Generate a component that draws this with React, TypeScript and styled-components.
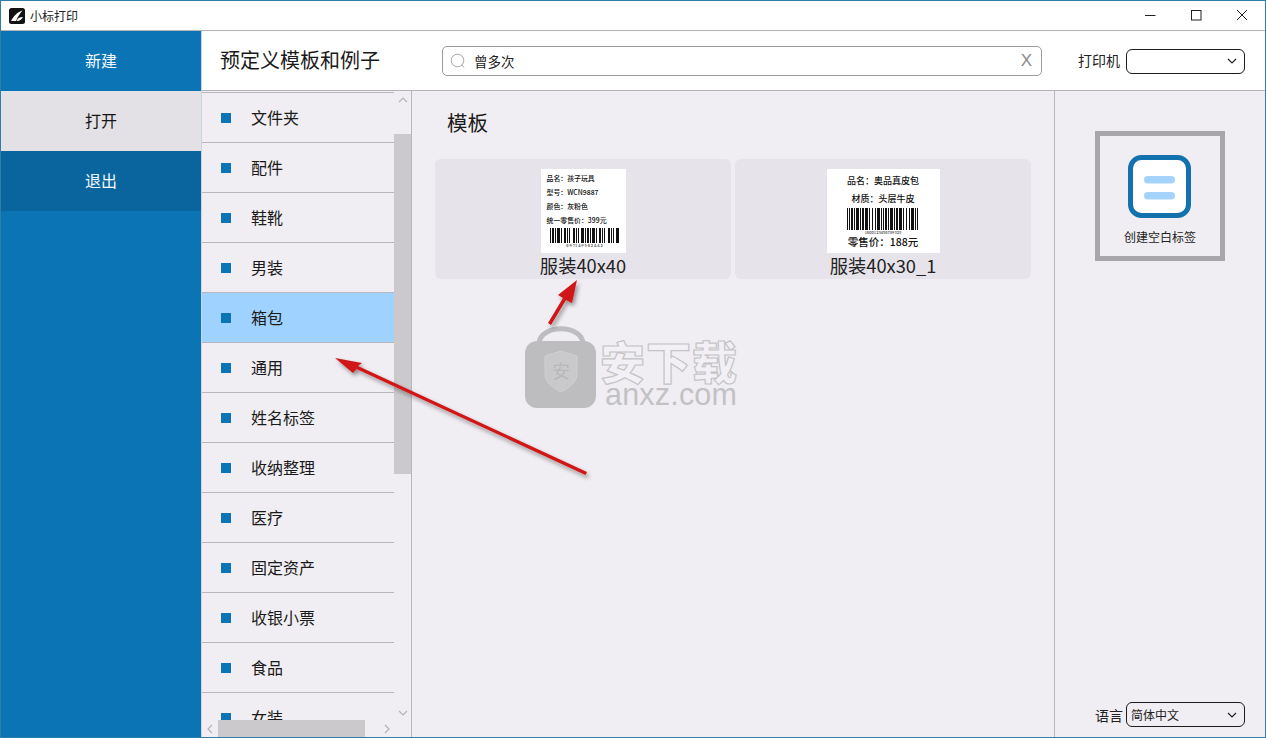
import React from "react";
import styled, { createGlobalStyle } from "styled-components";

const CJK = `"Noto Sans CJK SC", "Noto Sans", sans-serif`;

const Global = createGlobalStyle`
  html, body { margin: 0; padding: 0; background: #f0eef2; }
  body { font-family: ${CJK}; color: #151515; overflow: hidden; }
  * { box-sizing: border-box; }
`;

const Win = styled.div`
  position: relative;
  width: 1266px;
  height: 738px;
  display: flex;
  flex-direction: column;
  border: 1px solid #2f7ea6;
  overflow: hidden;
  background: #f0eef2;
`;

const TitleBar = styled.div`
  height: 30px;
  flex: none;
  display: flex;
  align-items: center;
  background: #fff;
  border-bottom: 1px solid #b4b4b8;
  padding-left: 8px;
`;
const AppTitle = styled.span`
  font-size: 12px;
  margin-left: 5px;
  color: #222;
  flex: 1;
`;
const WinBtns = styled.div`
  display: flex;
  height: 100%;
  align-items: center;
`;
const WinBtn = styled.div`
  width: 46px;
  height: 100%;
  display: flex;
  align-items: center;
  justify-content: center;
  padding-bottom: 2px;
`;

const Body = styled.div`
  flex: 1;
  display: flex;
  min-height: 0;
`;
const Sidebar = styled.nav`
  width: 200px;
  flex: none;
  background: #0a74b4;
  display: flex;
  flex-direction: column;
`;
const NavItem = styled.div<{ $v?: "open" | "exit" }>`
  height: 60px;
  display: flex;
  align-items: center;
  justify-content: center;
  font-size: 16px;
  padding-bottom: 2px;
  background: ${(p) => (p.$v === "open" ? "#e3e1e6" : p.$v === "exit" ? "#0a659e" : "#0a74b4")};
  color: ${(p) => (p.$v === "open" ? "#151515" : "#f2f8fc")};
`;
const Main = styled.div`
  flex: 1;
  min-width: 0;
  display: flex;
  flex-direction: column;
  border-left: 1px solid #c9d6e0;
`;
const Header = styled.header`
  height: 60px;
  flex: none;
  background: #fff;
  border-bottom: 1px solid #b4b4b8;
  display: flex;
  align-items: center;
  padding: 0 20px 0 18px;
`;
const Heading = styled.h1`
  margin: 0 0 2px;
  width: 222px;
  flex: none;
  font-size: 20px;
  font-weight: 400;
  color: #1a1a1a;
`;
const Search = styled.div`
  width: 600px;
  height: 30px;
  flex: none;
  border: 1px solid #9c9c9e;
  border-radius: 5px;
  display: flex;
  align-items: center;
  padding: 0 9px 0 7px;
  background: #fff;
`;
const SearchText = styled.span`
  flex: 1;
  font-size: 13.5px;
  color: #222;
  margin-left: 8px;
`;
const Clear = styled.span`
  font-family: "Liberation Sans", sans-serif;
  font-size: 17px;
  color: #8a8a8a;
`;
const FieldLabel = styled.span`
  font-size: 14px;
  color: #222;
  margin-right: 5px;
  white-space: nowrap;
`;
const PrinterLabel = styled(FieldLabel)`
  margin-left: 36px;
  margin-right: 6px;
  margin-bottom: 1px;
`;
const LangLabel = styled(FieldLabel)`
  margin-right: 3px;
`;
const Select = styled.div<{ $w: number }>`
  width: ${(p) => p.$w}px;
  height: 25px;
  border: 1px solid #1c1c1c;
  border-radius: 6px;
  display: flex;
  align-items: center;
  justify-content: space-between;
  padding: 0 7px 0 4px;
  background: transparent;
  font-size: 12px;
  color: #222;
`;
const PrinterSelect = styled(Select)`
  margin-top: 1px;
`;
const Content = styled.div`
  flex: 1;
  min-height: 0;
  display: flex;
`;
const ListPane = styled.div`
  position: relative;
  width: 210px;
  flex: none;
  display: flex;
  border-right: 1px solid #b8b8bc;
  overflow: hidden;
`;
const List = styled.div`
  width: 192px;
  flex: none;
  padding-top: 1px;
`;
const Row = styled.div<{ $sel?: boolean }>`
  height: 50px;
  display: flex;
  align-items: center;
  padding-left: 19px;
  border-top: 1px solid #b8b8bc;
  background: ${(p) => (p.$sel ? "#a0d2ff" : "transparent")};
  font-size: 16px;
  color: #1a1a1a;
`;
const RowLabel = styled.span`
  margin-bottom: 2px;
`;
const Bullet = styled.span`
  width: 10px;
  height: 10px;
  flex: none;
  background: #0a74b4;
  margin-right: 20px;
`;
const VTrack = styled.div`
  width: 17px;
  flex: none;
  display: flex;
  flex-direction: column;
`;
const VArrow = styled.div`
  height: 43px;
  flex: none;
  display: flex;
  justify-content: center;
  padding-top: 4px;
`;
const VThumb = styled.div`
  height: 340px;
  background: #cbc9cc;
  flex: none;
`;
const VBottom = styled.div`
  flex: 1;
  display: flex;
  flex-direction: column;
  justify-content: flex-end;
  align-items: center;
  padding-bottom: 19px;
`;
const HBar = styled.div`
  position: absolute;
  left: 0;
  right: 0;
  bottom: 0;
  height: 17px;
  background: #f0eef2;
  display: flex;
  align-items: center;
`;
const HArrow = styled.div`
  width: 16px;
  display: flex;
  justify-content: center;
  flex: none;
`;
const HThumb = styled.div`
  width: 147px;
  height: 17px;
  background: #cbc9cc;
  flex: none;
`;
const HRest = styled.div`
  flex: 1;
  display: flex;
  justify-content: flex-end;
  padding-right: 19px;
`;
const Templates = styled.section`
  flex: 1;
  min-width: 0;
  border-right: 1px solid #b8b8bc;
  padding: 16px 23px 0 23px;
`;
const SectionTitle = styled.h2`
  margin: 0 0 22px 12px;
  font-size: 20.5px;
  line-height: 30px;
  font-weight: 400;
  color: #1a1a1a;
`;
const Cards = styled.div`
  display: flex;
  gap: 4px;
`;
const Card = styled.div`
  width: 296px;
  height: 120px;
  background: #e6e4ea;
  border-radius: 6px;
  display: flex;
  flex-direction: column;
  align-items: center;
  padding-top: 10px;
`;
const Caption = styled.div`
  font-size: 18.3px;
  line-height: 24px;
  color: #222;
  white-space: nowrap;
`;
const Thumb = styled.div<{ $w: number }>`
  width: ${(p) => p.$w}px;
  height: 84px;
  background: #fff;
  flex: none;
  display: flex;
  flex-direction: column;
  overflow: hidden;
`;
const ThumbA = styled(Thumb)`
  padding: 2px 0 0 6px;
  font-size: 6.9px;
  font-weight: 500;
  color: #111;
`;
const ALine = styled.div`
  height: 14px;
  line-height: 14px;
  white-space: nowrap;
`;
const ABar = styled.div`
  margin: 1px 0 0 3px;
  display: flex;
  flex-direction: column;
  align-items: flex-start;
`;
const BarNo = styled.div`
  font-size: 4px;
  line-height: 5px;
  color: #444;
  text-align: center;
  white-space: nowrap;
`;
const ABarNo = styled(BarNo)`
  width: 70px;
`;
const ThumbB = styled(Thumb)`
  align-items: center;
  padding-top: 3px;
  font-size: 9px;
  font-weight: 500;
  color: #111;
`;
const BLine = styled.div`
  height: 18px;
  line-height: 18px;
  white-space: nowrap;
`;
const BPrice = styled.div`
  font-size: 10.5px;
  line-height: 13px;
  white-space: nowrap;
`;
const Side = styled.aside`
  width: 210px;
  flex: none;
  display: flex;
  flex-direction: column;
  padding: 40px 0 0 40px;
`;
const Blank = styled.div`
  width: 130px;
  height: 130px;
  border: 5px solid #a8a6a9;
  display: flex;
  flex-direction: column;
  align-items: center;
  padding-top: 19px;
`;
const BlankIcon = styled.svg`
  margin-right: 1px;
  flex: none;
`;
const BlankLabel = styled.div`
  font-size: 12px;
  line-height: 16px;
  margin-top: 11px;
  color: #222;
  white-space: nowrap;
`;
const Lang = styled.div`
  margin-top: auto;
  display: flex;
  align-items: center;
  margin-bottom: 10px;
`;
const Mark = styled.div`
  position: absolute;
  left: 524px;
  top: 325px;
  display: flex;
  gap: 8px;
  pointer-events: none;
`;
const MarkWords = styled.div`
  display: flex;
  flex-direction: column;
  padding-top: 14px;
`;
const MarkCn = styled.div`
  font-size: 45px;
  line-height: 41px;
  font-weight: 900;
  letter-spacing: 1px;
  margin-left: -5px;
  color: #f2f0f4;
  -webkit-text-stroke: 1.2px #c4c4c6;
  white-space: nowrap;
`;
const MarkEn = styled.div`
  font-family: "Liberation Sans", sans-serif;
  font-size: 30.5px;
  line-height: 26px;
  letter-spacing: 0.2px;
  color: #c2c2c4;
  white-space: nowrap;
`;
const Arrows = styled.svg`
  position: absolute;
  left: -1px;
  top: -1px;
  pointer-events: none;
`;

const Chev = ({ d, c = "#b4b4b6" }: { d: string; c?: string }) => (
  <svg width="10" height="10" viewBox="0 0 10 10" fill="none" stroke={c} strokeWidth="1.2">
    <path d={d} />
  </svg>
);
const UP = "M1 7L5 3L9 7";
const DOWN = "M1 3L5 7L9 3";
const LEFT = "M7 1L3 5L7 9";
const RIGHT = "M3 1L7 5L3 9";

const Barcode = ({ w, h, seed }: { w: number; h: number; seed: number[] }) => {
  const bars: React.ReactElement[] = [];
  let x = 0;
  let i = 0;
  while (x < w) {
    const bw = seed[i % seed.length];
    if (i % 2 === 0) bars.push(<rect key={i} x={x} y={0} width={bw} height={h} fill="#111" />);
    x += bw;
    i++;
  }
  return (
    <svg width={w} height={h} viewBox={`0 0 ${w} ${h}`} style={{ flex: "none" }}>
      {bars}
    </svg>
  );
};

const CATS = ["文件夹", "配件", "鞋靴", "男装", "箱包", "通用", "姓名标签", "收纳整理", "医疗", "固定资产", "收银小票", "食品", "女装"];

export default function App() {
  return (
    <Win>
      <Global />
      <TitleBar>
        <svg width="16" height="16" viewBox="0 0 16 16">
          <rect width="16" height="16" rx="2.5" fill="#111" />
          <path d="M2 13C4.5 8.5 8 4 13.5 2.5C11 5.5 8.5 9 7 13Z" fill="#fff" />
          <path d="M7.5 13C8.5 10.5 10.5 9 14 9C13 11 11 13 7.5 13Z" fill="#fff" />
        </svg>
        <AppTitle>小标打印</AppTitle>
        <WinBtns>
          <WinBtn>
            <svg width="12" height="12" viewBox="0 0 12 12"><path d="M1 6.5H11.5" stroke="#222" strokeWidth="1" /></svg>
          </WinBtn>
          <WinBtn>
            <svg width="12" height="12" viewBox="0 0 12 12"><rect x="1.5" y="1.5" width="9.5" height="9.5" fill="none" stroke="#222" strokeWidth="1" /></svg>
          </WinBtn>
          <WinBtn>
            <svg width="12" height="12" viewBox="0 0 12 12"><path d="M1 1L11 11M11 1L1 11" stroke="#222" strokeWidth="1" /></svg>
          </WinBtn>
        </WinBtns>
      </TitleBar>
      <Body>
        <Sidebar>
          <NavItem>新建</NavItem>
          <NavItem $v="open">打开</NavItem>
          <NavItem $v="exit">退出</NavItem>
        </Sidebar>
        <Main>
          <Header>
            <Heading>预定义模板和例子</Heading>
            <Search>
              <svg width="16" height="16" viewBox="0 0 16 16" fill="none" stroke="#a6a6a6" strokeWidth="1">
                <circle cx="7.5" cy="7.5" r="6.3" />
                <path d="M12 12L14 14.5" />
              </svg>
              <SearchText>曾多次</SearchText>
              <Clear>X</Clear>
            </Search>
            <PrinterLabel>打印机</PrinterLabel>
            <PrinterSelect $w={119}>
              <span />
              <Chev d={DOWN} c="#222" />
            </PrinterSelect>
          </Header>
          <Content>
            <ListPane>
              <List>
                {CATS.map((c) => (
                  <Row key={c} $sel={c === "箱包"}>
                    <Bullet />
                    <RowLabel>{c}</RowLabel>
                  </Row>
                ))}
              </List>
              <VTrack>
                <VArrow><Chev d={UP} /></VArrow>
                <VThumb />
                <VBottom><Chev d={DOWN} /></VBottom>
              </VTrack>
              <HBar>
                <HArrow><Chev d={LEFT} /></HArrow>
                <HThumb />
                <HRest><Chev d={RIGHT} /></HRest>
              </HBar>
            </ListPane>
            <Templates>
              <SectionTitle>模板</SectionTitle>
              <Cards>
                <Card>
                  <ThumbA $w={85}>
                    <ALine>品名：孩子玩具</ALine>
                    <ALine>型号：WCN9887</ALine>
                    <ALine>颜色：灰粉色</ALine>
                    <ALine>统一零售价：399元</ALine>
                    <ABar>
                      <Barcode w={70} h={15} seed={[1, 1, 2, 1, 1, 1, 3, 1, 1, 2, 2, 1, 1, 1, 1, 3, 2, 1, 1, 1, 1, 2, 3, 1]} />
                      <ABarNo>6 9 71 4 9 5 6 2 4 4 2</ABarNo>
                    </ABar>
                  </ThumbA>
                  <Caption>服装40x40</Caption>
                </Card>
                <Card>
                  <ThumbB $w={113}>
                    <BLine>品名：奥品真皮包</BLine>
                    <BLine>材质：头层牛皮</BLine>
                    <Barcode w={72} h={22} seed={[1, 1, 1, 1, 2, 1, 1, 1, 3, 1, 1, 1, 2, 1, 3, 1, 1, 2, 1, 2, 1, 1, 3, 1]} />
                    <BarNo>1600123456789325</BarNo>
                    <BPrice>零售价：188元</BPrice>
                  </ThumbB>
                  <Caption>服装40x30_1</Caption>
                </Card>
              </Cards>
            </Templates>
            <Side>
              <Blank>
                <BlankIcon width="63" height="63" viewBox="0 0 63 63">
                  <rect x="2.5" y="2.5" width="58" height="58" rx="11" fill="#fff" stroke="#1272ae" strokeWidth="5" />
                  <rect x="16" y="21" width="31" height="7.5" rx="3.75" fill="#a6d3fb" />
                  <rect x="16" y="37" width="31" height="7.5" rx="3.75" fill="#a6d3fb" />
                </BlankIcon>
                <BlankLabel>创建空白标签</BlankLabel>
              </Blank>
              <Lang>
                <LangLabel>语言</LangLabel>
                <Select $w={119}>
                  简体中文
                  <Chev d={DOWN} c="#222" />
                </Select>
              </Lang>
            </Side>
          </Content>
        </Main>
      </Body>
      <Mark>
        <svg width="72" height="82" viewBox="0 0 72 82">
          <path d="M14 17C16 -2 56 -2 58 17" fill="none" stroke="#bdbdbf" strokeWidth="5" />
          <rect x="0" y="15" width="71" height="67" rx="12" fill="#bdbdbf" />
          <path d="M20 30L36 25L52 30V48C52 56 44 62 36 66C28 62 20 56 20 48Z" fill="#c9c9cb" stroke="#d0d0d2" />
          <text x="36" y="52" textAnchor="middle" fontSize="18" fill="#b8b8ba" fontFamily={CJK}>安</text>
        </svg>
        <MarkWords>
          <MarkCn>安下载</MarkCn>
          <MarkEn>anxz.com</MarkEn>
        </MarkWords>
      </Mark>
      <Arrows width="1266" height="738" viewBox="0 0 1266 738">
        <defs>
          <filter id="sh" x="-20%" y="-20%" width="140%" height="140%">
            <feDropShadow dx="2" dy="3" stdDeviation="2" floodColor="#000" floodOpacity="0.4" />
          </filter>
        </defs>
        <g filter="url(#sh)" fill="#d01618" stroke="none">
          <path d="M335 358L362 363L358 366L587 472L585.5 475L356.5 369L353 373Z" />
          <path d="M577 280L572 303L566 300L551 325L548 323L563 298L558 295Z" />
        </g>
      </Arrows>
    </Win>
  );
}
